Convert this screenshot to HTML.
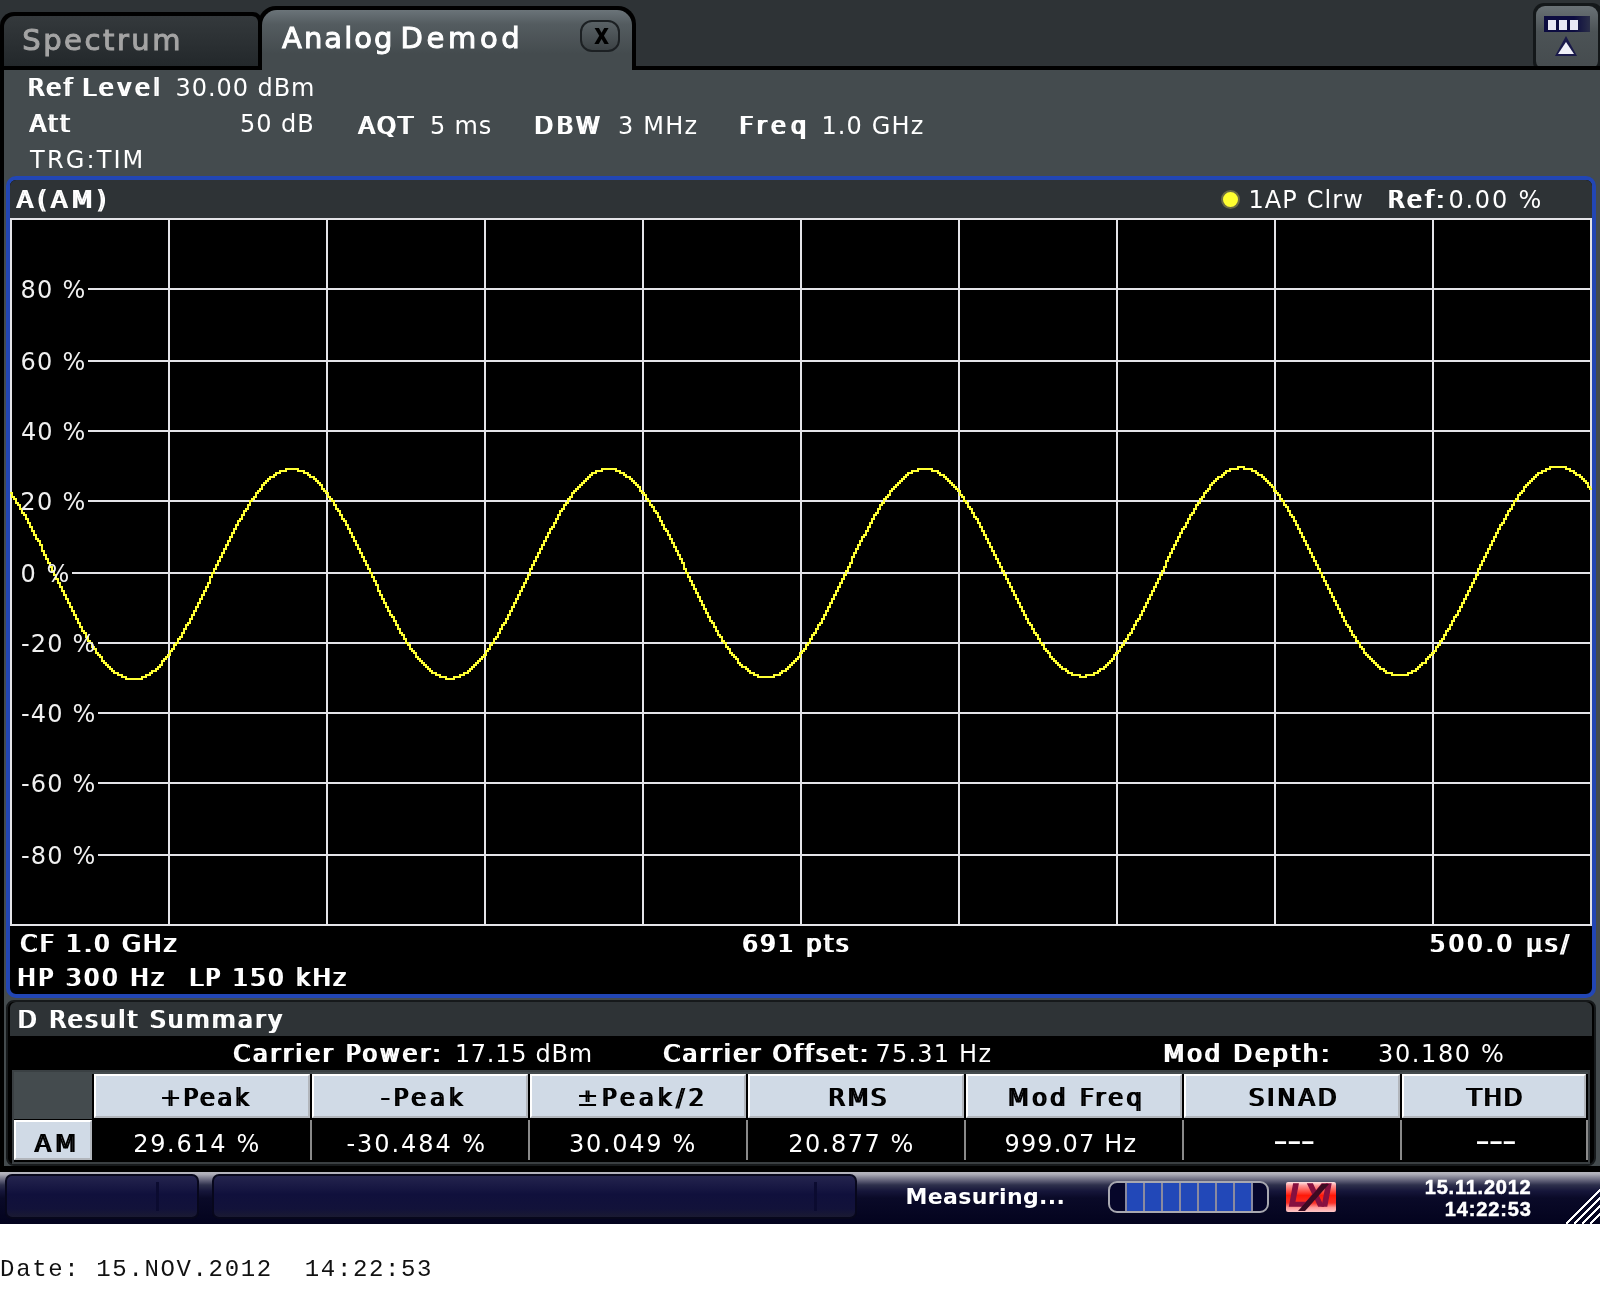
<!DOCTYPE html>
<html><head><meta charset="utf-8"><title>Analog Demod</title>
<style>
html,body{margin:0;padding:0;background:#fff;}
body{width:1600px;height:1316px;position:relative;overflow:hidden;font-family:'DejaVu Sans','Liberation Sans',sans-serif;}
.a{position:absolute;box-sizing:border-box;}
.t{position:absolute;white-space:pre;line-height:0;}
.hc{position:absolute;box-sizing:border-box;background:#d0dae6;border-left:2px solid #fff;border-top:2px solid #fff;border-right:2px solid #b2b6bc;border-bottom:2px solid #b2b6bc;}
.vs{position:absolute;width:2px;background:#8a8a8a;top:1120px;height:40px;}
</style></head><body><div id="root" style="position:absolute;left:0;top:0;width:1600px;height:1316px;will-change:transform">
<div class="a" style="left:0;top:0;width:1600px;height:1224px;background:#000"></div>
<div class="a" id="topbar" style="left:0;top:0;width:1600px;height:66px;background:#2e3336"></div>
<div class="a" style="left:0;top:12px;width:262px;height:58px;background:#000;border-radius:14px 9px 0 0"></div>
<div class="a" style="left:4px;top:16px;width:254px;height:50px;background:linear-gradient(#34393c,#23282b);border-radius:11px 6px 0 0"></div>
<div class="a" id="panel" style="left:4px;top:70px;width:1596px;height:1096px;background:#444b4e"></div>
<div class="a" style="left:0;top:66px;width:1600px;height:4px;background:#000"></div>
<div class="a" style="left:258px;top:6px;width:378px;height:64px;background:#000;border-radius:18px 18px 0 0"></div>
<div class="a" style="left:262px;top:10px;width:370px;height:64px;background:linear-gradient(#6b7479 0px,#545c60 14px,#444b4e 44px);border-radius:15px 15px 0 0"></div>
<div class="a" style="left:580px;top:20px;width:40px;height:32px;border-radius:12px;border:2px solid #1c2023;background:linear-gradient(#5a6266,#3c4245)"></div>
<div class="t" style="left:593.50px;top:35px;font:700 28px/0 'DejaVu Sans','Liberation Sans',sans-serif;letter-spacing:0.000px;color:#000;transform:scaleX(.84);transform-origin:0 50%;">x</div>
<div class="a" style="left:1533px;top:3px;width:70px;height:70px;background:#14181a;border-radius:11px"></div>
<div class="a" style="left:1536px;top:6px;width:62px;height:64px;background:linear-gradient(#6a7276,#4c5356 40%,#454b4e);border-radius:9px"></div>
<div class="a" style="left:1400px;top:66px;width:200px;height:4px;background:#000"></div>
<div class="a" style="left:1400px;top:70px;width:200px;height:10px;background:#444b4e"></div>
<div class="a" style="left:1544px;top:16px;width:46px;height:16px;background:linear-gradient(90deg,#0c0c40 65%,#2a2e48)"></div>
<div class="a" style="left:1548px;top:20px;width:8px;height:10px;background:#e8e8f4"></div>
<div class="a" style="left:1559px;top:20px;width:8px;height:10px;background:#e8e8f4"></div>
<div class="a" style="left:1570px;top:20px;width:8px;height:10px;background:#e8e8f4"></div>
<svg class="a" style="left:1554px;top:34px" width="24" height="24"><polygon points="12,2 23,22 1,22" fill="#1a1a4a"/><polygon points="12,8 20,20 4,20" fill="#f0f0f8"/></svg>
<div class="t" style="left:22.23px;top:40px;font:400 29px/0 'DejaVu Sans','Liberation Sans',sans-serif;letter-spacing:2.539px;color:#a4a4a4;-webkit-text-stroke:1px #a4a4a4;">Spectrum</div>
<div class="t" style="left:282.05px;top:38px;font:400 29px/0 'DejaVu Sans','Liberation Sans',sans-serif;letter-spacing:2.050px;color:#fff;-webkit-text-stroke:1px #fff;">Analog</div>
<div class="t" style="left:400.62px;top:38px;font:400 29px/0 'DejaVu Sans','Liberation Sans',sans-serif;letter-spacing:3.625px;color:#fff;-webkit-text-stroke:1px #fff;">Demod</div>
<div class="t" style="left:27.02px;top:88px;font:400 24px/0 'DejaVu Sans','Liberation Sans',sans-serif;letter-spacing:2.738px;color:#fff;text-shadow:2px 0 0 #fff;">Ref</div>
<div class="t" style="left:81.38px;top:88px;font:400 24px/0 'DejaVu Sans','Liberation Sans',sans-serif;letter-spacing:3.531px;color:#fff;text-shadow:2px 0 0 #fff;">Level</div>
<div class="t" style="left:175.62px;top:88px;font:400 24px/0 'DejaVu Sans','Liberation Sans',sans-serif;letter-spacing:0.925px;color:#fff;">30.00 dBm</div>
<div class="t" style="left:28.75px;top:124px;font:400 24px/0 'DejaVu Sans','Liberation Sans',sans-serif;letter-spacing:2.500px;color:#fff;text-shadow:2px 0 0 #fff;">Att</div>
<div class="t" style="left:240.12px;top:124px;font:400 24px/0 'DejaVu Sans','Liberation Sans',sans-serif;letter-spacing:0.938px;color:#fff;">50 dB</div>
<div class="t" style="left:357.55px;top:126px;font:400 24px/0 'DejaVu Sans','Liberation Sans',sans-serif;letter-spacing:2.412px;color:#fff;text-shadow:2px 0 0 #fff;">AQT</div>
<div class="t" style="left:430.12px;top:126px;font:400 24px/0 'DejaVu Sans','Liberation Sans',sans-serif;letter-spacing:0.750px;color:#fff;">5 ms</div>
<div class="t" style="left:533.62px;top:126px;font:400 24px/0 'DejaVu Sans','Liberation Sans',sans-serif;letter-spacing:3.625px;color:#fff;text-shadow:2px 0 0 #fff;">DBW</div>
<div class="t" style="left:618.12px;top:126px;font:400 24px/0 'DejaVu Sans','Liberation Sans',sans-serif;letter-spacing:1.156px;color:#fff;">3 MHz</div>
<div class="t" style="left:738.62px;top:126px;font:400 24px/0 'DejaVu Sans','Liberation Sans',sans-serif;letter-spacing:5.042px;color:#fff;text-shadow:2px 0 0 #fff;">Freq</div>
<div class="t" style="left:821.38px;top:126px;font:400 24px/0 'DejaVu Sans','Liberation Sans',sans-serif;letter-spacing:1.167px;color:#fff;">1.0 GHz</div>
<div class="t" style="left:30.12px;top:160px;font:400 24px/0 'DejaVu Sans','Liberation Sans',sans-serif;letter-spacing:2.125px;color:#fff;">TRG:TIM</div>
<div class="a" id="win" style="left:6px;top:176px;width:1590px;height:822px;border:4px solid #2246b4;border-radius:10px;background:#000"></div>
<div class="a" style="left:10px;top:180px;width:1582px;height:38px;background:#2e3336;border-radius:6px 6px 0 0"></div>
<div class="t" style="left:15.75px;top:200px;font:400 24px/0 'DejaVu Sans','Liberation Sans',sans-serif;letter-spacing:4.250px;color:#fff;text-shadow:2px 0 0 #fff;">A(AM)</div>
<div class="a" style="left:1221px;top:190px;width:19px;height:19px;border-radius:50%;background:#ffff30;border:2px solid #6c6c44"></div>
<div class="t" style="left:1248.38px;top:200px;font:400 24px/0 'DejaVu Sans','Liberation Sans',sans-serif;letter-spacing:1.125px;color:#fff;">1AP Clrw</div>
<div class="t" style="left:1387.12px;top:200px;font:400 24px/0 'DejaVu Sans','Liberation Sans',sans-serif;letter-spacing:3.375px;color:#fff;text-shadow:2px 0 0 #fff;">Ref:</div>
<div class="t" style="left:1448.38px;top:200px;font:400 24px/0 'DejaVu Sans','Liberation Sans',sans-serif;letter-spacing:1.800px;color:#fff;">0.00 %</div>
<svg class="a" style="left:0;top:0" width="1600" height="1000" shape-rendering="crispEdges"><rect x="10" y="218" width="2" height="708" fill="#e4e4e8"/><rect x="168" y="218" width="2" height="708" fill="#e4e4e8"/><rect x="326" y="218" width="2" height="708" fill="#e4e4e8"/><rect x="484" y="218" width="2" height="708" fill="#e4e4e8"/><rect x="642" y="218" width="2" height="708" fill="#e4e4e8"/><rect x="800" y="218" width="2" height="708" fill="#e4e4e8"/><rect x="958" y="218" width="2" height="708" fill="#e4e4e8"/><rect x="1116" y="218" width="2" height="708" fill="#e4e4e8"/><rect x="1274" y="218" width="2" height="708" fill="#e4e4e8"/><rect x="1432" y="218" width="2" height="708" fill="#e4e4e8"/><rect x="1590" y="218" width="2" height="708" fill="#e4e4e8"/><rect x="10" y="218" width="1582" height="2" fill="#e4e4e8"/><rect x="88" y="288" width="1504" height="2" fill="#e4e4e8"/><rect x="88" y="360" width="1504" height="2" fill="#e4e4e8"/><rect x="88" y="430" width="1504" height="2" fill="#e4e4e8"/><rect x="88" y="500" width="1504" height="2" fill="#e4e4e8"/><rect x="72" y="572" width="1520" height="2" fill="#e4e4e8"/><rect x="98" y="642" width="1494" height="2" fill="#e4e4e8"/><rect x="98" y="712" width="1494" height="2" fill="#e4e4e8"/><rect x="98" y="782" width="1494" height="2" fill="#e4e4e8"/><rect x="98" y="854" width="1494" height="2" fill="#e4e4e8"/><rect x="10" y="924" width="1582" height="2" fill="#e4e4e8"/><path d="M10,493h2V497h2V499h2V503h2V505h2V509h2V513h2V515h2V519h2V523h2V527h2V531h2V535h2V539h2V541h2V545h2V551h2V555h2V559h2V563h2V567h2V571h2V575h2V579h2V583h2V587h2V591h2V595h2V599h2V603h2V607h2V611h2V615h2V619h2V623h2V627h2V631h2V633h2V637h2V641h2V643h2V647h2V649h2V653h2V655h2V657h2V661h2V663h2V665h2V667h2V669h2V671h2V673h2V673h2V675h2V675h2V677h2V677h2V679h2V679h2V679h2V679h2V679h2V679h2V679h2V679h2V677h2V677h2V675h2V675h2V673h2V671h2V671h2V669h2V667h2V665h2V661h2V659h2V657h2V655h2V651h2V649h2V645h2V643h2V639h2V637h2V633h2V629h2V625h2V623h2V619h2V615h2V611h2V607h2V603h2V599h2V595h2V591h2V587h2V583h2V577h2V573h2V569h2V565h2V561h2V557h2V553h2V549h2V545h2V541h2V537h2V533h2V529h2V525h2V521h2V519h2V515h2V511h2V509h2V505h2V501h2V499h2V497h2V493h2V491h2V489h2V485h2V483h2V481h2V479h2V477h2V477h2V475h2V473h2V473h2V471h2V471h2V471h2V469h2V469h2V469h2V469h2V469h2V469h2V471h2V471h2V471h2V473h2V473h2V475h2V477h2V477h2V479h2V481h2V483h2V485h2V489h2V491h2V493h2V497h2V499h2V501h2V505h2V509h2V511h2V515h2V519h2V521h2V525h2V529h2V533h2V537h2V541h2V545h2V549h2V553h2V557h2V561h2V565h2V569h2V573h2V577h2V581h2V585h2V591h2V595h2V599h2V603h2V607h2V611h2V615h2V617h2V621h2V625h2V629h2V633h2V635h2V639h2V643h2V645h2V649h2V651h2V653h2V657h2V659h2V661h2V663h2V665h2V667h2V669h2V671h2V673h2V673h2V675h2V675h2V677h2V677h2V677h2V679h2V679h2V679h2V679h2V677h2V677h2V677h2V675h2V675h2V673h2V673h2V671h2V669h2V667h2V665h2V663h2V661h2V659h2V657h2V655h2V651h2V649h2V645h2V643h2V639h2V637h2V633h2V629h2V625h2V623h2V619h2V615h2V611h2V607h2V603h2V599h2V595h2V591h2V587h2V583h2V579h2V575h2V569h2V565h2V561h2V557h2V553h2V549h2V545h2V541h2V537h2V533h2V529h2V527h2V523h2V519h2V515h2V511h2V509h2V505h2V503h2V499h2V497h2V493h2V491h2V489h2V487h2V485h2V483h2V481h2V479h2V477h2V475h2V473h2V473h2V471h2V471h2V471h2V469h2V469h2V469h2V469h2V469h2V469h2V469h2V471h2V471h2V473h2V473h2V475h2V477h2V477h2V479h2V481h2V483h2V485h2V487h2V491h2V493h2V495h2V499h2V501h2V505h2V507h2V511h2V513h2V517h2V521h2V525h2V529h2V531h2V535h2V539h2V543h2V547h2V551h2V555h2V559h2V563h2V569h2V573h2V577h2V581h2V585h2V589h2V593h2V597h2V601h2V605h2V609h2V613h2V617h2V621h2V623h2V627h2V631h2V635h2V637h2V641h2V643h2V647h2V649h2V653h2V655h2V657h2V659h2V663h2V665h2V667h2V667h2V669h2V671h2V673h2V673h2V675h2V675h2V677h2V677h2V677h2V677h2V677h2V677h2V677h2V677h2V675h2V675h2V675h2V673h2V671h2V671h2V669h2V667h2V665h2V663h2V661h2V659h2V657h2V653h2V651h2V649h2V645h2V643h2V639h2V635h2V633h2V629h2V625h2V623h2V619h2V615h2V611h2V607h2V603h2V599h2V595h2V591h2V587h2V583h2V579h2V575h2V571h2V567h2V563h2V557h2V553h2V549h2V545h2V541h2V537h2V535h2V531h2V527h2V523h2V519h2V515h2V513h2V509h2V505h2V503h2V499h2V497h2V495h2V491h2V489h2V487h2V485h2V483h2V481h2V479h2V477h2V475h2V473h2V473h2V471h2V471h2V471h2V469h2V469h2V469h2V469h2V469h2V469h2V469h2V471h2V471h2V471h2V473h2V475h2V475h2V477h2V479h2V481h2V483h2V485h2V487h2V489h2V491h2V495h2V497h2V501h2V503h2V507h2V509h2V513h2V517h2V519h2V523h2V527h2V531h2V535h2V539h2V543h2V547h2V551h2V555h2V559h2V563h2V567h2V571h2V575h2V579h2V583h2V587h2V591h2V595h2V599h2V603h2V607h2V611h2V615h2V619h2V623h2V625h2V629h2V633h2V635h2V639h2V643h2V645h2V649h2V651h2V653h2V657h2V659h2V661h2V663h2V665h2V667h2V669h2V669h2V671h2V673h2V673h2V675h2V675h2V675h2V675h2V677h2V677h2V677h2V675h2V675h2V675h2V675h2V673h2V673h2V671h2V669h2V669h2V667h2V665h2V663h2V661h2V659h2V655h2V653h2V651h2V647h2V645h2V641h2V639h2V635h2V633h2V629h2V625h2V621h2V619h2V615h2V611h2V607h2V603h2V599h2V595h2V591h2V587h2V583h2V579h2V575h2V571h2V567h2V561h2V557h2V553h2V549h2V545h2V541h2V537h2V533h2V529h2V527h2V523h2V519h2V515h2V513h2V509h2V505h2V503h2V499h2V497h2V493h2V491h2V489h2V485h2V483h2V481h2V479h2V477h2V477h2V475h2V473h2V471h2V471h2V469h2V469h2V469h2V469h2V467h2V467h2V467h2V469h2V469h2V469h2V469h2V471h2V471h2V473h2V475h2V475h2V477h2V479h2V481h2V483h2V485h2V487h2V491h2V493h2V495h2V499h2V501h2V505h2V507h2V511h2V515h2V517h2V521h2V525h2V529h2V533h2V537h2V541h2V545h2V549h2V553h2V557h2V561h2V565h2V569h2V573h2V577h2V581h2V585h2V589h2V593h2V597h2V601h2V605h2V609h2V613h2V617h2V621h2V625h2V627h2V631h2V635h2V637h2V641h2V643h2V647h2V649h2V653h2V655h2V657h2V659h2V661h2V663h2V665h2V667h2V669h2V669h2V671h2V673h2V673h2V673h2V675h2V675h2V675h2V675h2V675h2V675h2V675h2V675h2V673h2V673h2V671h2V671h2V669h2V667h2V665h2V663h2V663h2V659h2V657h2V655h2V653h2V651h2V647h2V645h2V641h2V639h2V635h2V631h2V629h2V625h2V621h2V617h2V615h2V611h2V607h2V603h2V599h2V595h2V591h2V587h2V583h2V579h2V575h2V569h2V565h2V561h2V557h2V553h2V549h2V545h2V541h2V537h2V533h2V529h2V525h2V523h2V519h2V515h2V511h2V509h2V505h2V501h2V499h2V495h2V493h2V491h2V487h2V485h2V483h2V481h2V479h2V477h2V475h2V473h2V473h2V471h2V471h2V469h2V469h2V467h2V467h2V467h2V467h2V467h2V467h2V467h2V467h2V469h2V469h2V471h2V471h2V473h2V475h2V475h2V477h2V479h2V481h2V483h2V487h2V489h2" fill="none" stroke="#ffff33" stroke-width="2" stroke-linejoin="miter" stroke-linecap="butt"/></svg>
<div class="t" style="left:20.38px;top:290px;font:400 24px/0 'DejaVu Sans','Liberation Sans',sans-serif;letter-spacing:1.333px;color:#f0f0f0;">80 %</div>
<div class="t" style="left:20.38px;top:362px;font:400 24px/0 'DejaVu Sans','Liberation Sans',sans-serif;letter-spacing:1.333px;color:#f0f0f0;">60 %</div>
<div class="t" style="left:20.88px;top:432px;font:400 24px/0 'DejaVu Sans','Liberation Sans',sans-serif;letter-spacing:1.167px;color:#f0f0f0;">40 %</div>
<div class="t" style="left:20.25px;top:502px;font:400 24px/0 'DejaVu Sans','Liberation Sans',sans-serif;letter-spacing:1.375px;color:#f0f0f0;">20 %</div>
<div class="t" style="left:20.38px;top:574px;font:400 24px/0 'DejaVu Sans','Liberation Sans',sans-serif;letter-spacing:1.625px;color:#f0f0f0;">0 %</div>
<div class="t" style="left:20.88px;top:644px;font:400 24px/0 'DejaVu Sans','Liberation Sans',sans-serif;letter-spacing:1.188px;color:#f0f0f0;">-20 %</div>
<div class="t" style="left:20.88px;top:714px;font:400 24px/0 'DejaVu Sans','Liberation Sans',sans-serif;letter-spacing:1.188px;color:#f0f0f0;">-40 %</div>
<div class="t" style="left:20.88px;top:784px;font:400 24px/0 'DejaVu Sans','Liberation Sans',sans-serif;letter-spacing:1.188px;color:#f0f0f0;">-60 %</div>
<div class="t" style="left:20.88px;top:856px;font:400 24px/0 'DejaVu Sans','Liberation Sans',sans-serif;letter-spacing:1.188px;color:#f0f0f0;">-80 %</div>
<div class="t" style="left:19.62px;top:944px;font:400 24px/0 'DejaVu Sans','Liberation Sans',sans-serif;letter-spacing:2.514px;color:#fff;text-shadow:2px 0 0 #fff;">CF 1.0 GHz</div>
<div class="t" style="left:741.38px;top:944px;font:400 24px/0 'DejaVu Sans','Liberation Sans',sans-serif;letter-spacing:2.604px;color:#fff;text-shadow:2px 0 0 #fff;">691 pts</div>
<div class="t" style="left:1429.12px;top:944px;font:400 24px/0 'DejaVu Sans','Liberation Sans',sans-serif;letter-spacing:3.328px;color:#fff;text-shadow:2px 0 0 #fff;">500.0 µs/</div>
<div class="t" style="left:16.62px;top:978px;font:400 24px/0 'DejaVu Sans','Liberation Sans',sans-serif;letter-spacing:2.766px;color:#fff;text-shadow:2px 0 0 #fff;">HP 300 Hz</div>
<div class="t" style="left:188.62px;top:978px;font:400 24px/0 'DejaVu Sans','Liberation Sans',sans-serif;letter-spacing:2.542px;color:#fff;text-shadow:2px 0 0 #fff;">LP 150 kHz</div>
<div class="a" style="left:6px;top:1000px;width:1590px;height:166px;background:#000;border:2px solid #16191b;border-radius:8px"></div>
<div class="a" style="left:10px;top:1002px;width:1582px;height:34px;background:#2e3336;border-radius:6px 6px 0 0"></div>
<div class="t" style="left:17.12px;top:1020px;font:400 24px/0 'DejaVu Sans','Liberation Sans',sans-serif;letter-spacing:2.683px;color:#fff;text-shadow:2px 0 0 #fff;">D Result Summary</div>
<div class="t" style="left:232.38px;top:1054px;font:400 24px/0 'DejaVu Sans','Liberation Sans',sans-serif;letter-spacing:2.865px;color:#fff;text-shadow:2px 0 0 #fff;">Carrier Power:</div>
<div class="t" style="left:454.88px;top:1054px;font:400 24px/0 'DejaVu Sans','Liberation Sans',sans-serif;letter-spacing:0.719px;color:#fff;">17.15 dBm</div>
<div class="t" style="left:662.38px;top:1054px;font:400 24px/0 'DejaVu Sans','Liberation Sans',sans-serif;letter-spacing:2.464px;color:#fff;text-shadow:2px 0 0 #fff;">Carrier Offset:</div>
<div class="t" style="left:875.50px;top:1054px;font:400 24px/0 'DejaVu Sans','Liberation Sans',sans-serif;letter-spacing:1.214px;color:#fff;">75.31 Hz</div>
<div class="t" style="left:1162.62px;top:1054px;font:400 24px/0 'DejaVu Sans','Liberation Sans',sans-serif;letter-spacing:2.917px;color:#fff;text-shadow:2px 0 0 #fff;">Mod Depth:</div>
<div class="t" style="left:1378.12px;top:1054px;font:400 24px/0 'DejaVu Sans','Liberation Sans',sans-serif;letter-spacing:1.607px;color:#fff;">30.180 %</div>
<div class="a" style="left:12px;top:1070px;width:1578px;height:94px;background:#000;border:2px solid #3a3f42;border-top:2px solid #3a4043;box-shadow:inset 0 2px 0 #444b4e"></div>
<div class="a" style="left:14px;top:1073px;width:78px;height:46px;background:#444b4e"></div>
<div class="hc" style="left:14px;top:1120px;width:78px;height:40px"></div>
<div class="hc" style="left:94px;top:1074px;width:216px;height:44px"></div>
<div class="t" style="left:159.50px;top:1098px;font:400 24px/0 'DejaVu Sans','Liberation Sans',sans-serif;letter-spacing:2.875px;color:#000;text-shadow:2px 0 0 #000;">+Peak</div>
<div class="t" style="left:133.25px;top:1144px;font:400 24px/0 'DejaVu Sans','Liberation Sans',sans-serif;letter-spacing:1.661px;color:#fff;">29.614 %</div>
<div class="hc" style="left:312px;top:1074px;width:216px;height:44px"></div>
<div class="vs" style="left:310px"></div>
<div class="t" style="left:379.88px;top:1098px;font:400 24px/0 'DejaVu Sans','Liberation Sans',sans-serif;letter-spacing:4.094px;color:#000;text-shadow:2px 0 0 #000;">-Peak</div>
<div class="t" style="left:346.38px;top:1144px;font:400 24px/0 'DejaVu Sans','Liberation Sans',sans-serif;letter-spacing:1.953px;color:#fff;">-30.484 %</div>
<div class="hc" style="left:530px;top:1074px;width:216px;height:44px"></div>
<div class="vs" style="left:528px"></div>
<div class="t" style="left:576.50px;top:1098px;font:400 24px/0 'DejaVu Sans','Liberation Sans',sans-serif;letter-spacing:4.333px;color:#000;text-shadow:2px 0 0 #000;">±Peak/2</div>
<div class="t" style="left:569.12px;top:1144px;font:400 24px/0 'DejaVu Sans','Liberation Sans',sans-serif;letter-spacing:1.679px;color:#fff;">30.049 %</div>
<div class="hc" style="left:748px;top:1074px;width:216px;height:44px"></div>
<div class="vs" style="left:746px"></div>
<div class="t" style="left:827.62px;top:1098px;font:400 24px/0 'DejaVu Sans','Liberation Sans',sans-serif;letter-spacing:2.562px;color:#000;text-shadow:2px 0 0 #000;">RMS</div>
<div class="t" style="left:788.25px;top:1144px;font:400 24px/0 'DejaVu Sans','Liberation Sans',sans-serif;letter-spacing:1.518px;color:#fff;">20.877 %</div>
<div class="hc" style="left:966px;top:1074px;width:216px;height:44px"></div>
<div class="vs" style="left:964px"></div>
<div class="t" style="left:1007.12px;top:1098px;font:400 24px/0 'DejaVu Sans','Liberation Sans',sans-serif;letter-spacing:3.411px;color:#000;text-shadow:2px 0 0 #000;">Mod Freq</div>
<div class="t" style="left:1004.50px;top:1144px;font:400 24px/0 'DejaVu Sans','Liberation Sans',sans-serif;letter-spacing:1.156px;color:#fff;">999.07 Hz</div>
<div class="hc" style="left:1184px;top:1074px;width:216px;height:44px"></div>
<div class="vs" style="left:1182px"></div>
<div class="t" style="left:1247.88px;top:1098px;font:400 24px/0 'DejaVu Sans','Liberation Sans',sans-serif;letter-spacing:3.094px;color:#000;text-shadow:2px 0 0 #000;">SINAD</div>
<div class="hc" style="left:1402px;top:1074px;width:184px;height:44px"></div>
<div class="vs" style="left:1400px"></div>
<div class="t" style="left:1466.12px;top:1098px;font:400 24px/0 'DejaVu Sans','Liberation Sans',sans-serif;letter-spacing:2.000px;color:#000;text-shadow:2px 0 0 #000;">THD</div>
<div class="vs" style="left:1586px"></div>
<div class="t" style="left:33.75px;top:1144px;font:400 24px/0 'DejaVu Sans','Liberation Sans',sans-serif;letter-spacing:4.000px;color:#000;text-shadow:2px 0 0 #000;">AM</div>
<div class="t" style="left:1272.88px;top:1141px;font:400 24px/0 'DejaVu Sans','Liberation Sans',sans-serif;letter-spacing:-0.850px;color:#fff;transform:scale(1.746,1.4);transform-origin:0 1.6px;">---</div>
<div class="t" style="left:1474.88px;top:1141px;font:400 24px/0 'DejaVu Sans','Liberation Sans',sans-serif;letter-spacing:-0.993px;color:#fff;transform:scale(1.746,1.4);transform-origin:0 1.6px;">---</div>
<div class="a" id="status" style="left:0;top:1172px;width:1600px;height:52px;background:linear-gradient(#b6b6be 0px,#b0b0ba 2px,#8a8a9a 5px,#5c5c74 9px,#2e304c 13px,#16163a 19px,#0a0a28 26px,#03031e 52px)"></div>
<div class="a" style="left:5px;top:1174px;width:194px;height:45px;border-radius:7px;background:linear-gradient(#24244e,#10103c 45%,#12123a 80%,#1a1a32);border:2px solid #07071c"></div>
<div class="a" style="left:156px;top:1182px;width:3px;height:29px;background:#0b0b30"></div>
<div class="a" style="left:212px;top:1174px;width:645px;height:45px;border-radius:7px;background:linear-gradient(#24244e,#10103c 45%,#12123a 80%,#1a1a32);border:2px solid #07071c"></div>
<div class="a" style="left:814px;top:1182px;width:3px;height:29px;background:#0b0b30"></div>
<div class="t" style="left:905.60px;top:1197px;font:700 22px/0 'DejaVu Sans','Liberation Sans',sans-serif;letter-spacing:0.355px;color:#fff;">Measuring...</div>
<div class="a" style="left:1108px;top:1181px;width:161px;height:32px;border-radius:9px;border:2px solid #a8a8b0;background:#06062a"></div>
<div class="a" style="left:1127px;top:1183px;width:16px;height:28px;background:#2248b8"></div>
<div class="a" style="left:1145px;top:1183px;width:16px;height:28px;background:#2248b8"></div>
<div class="a" style="left:1163px;top:1183px;width:16px;height:28px;background:#2248b8"></div>
<div class="a" style="left:1181px;top:1183px;width:16px;height:28px;background:#2248b8"></div>
<div class="a" style="left:1199px;top:1183px;width:16px;height:28px;background:#2248b8"></div>
<div class="a" style="left:1217px;top:1183px;width:16px;height:28px;background:#2248b8"></div>
<div class="a" style="left:1235px;top:1183px;width:16px;height:28px;background:#2248b8"></div>
<div class="a" style="left:1125px;top:1183px;width:2px;height:28px;background:#8a8aa0"></div>
<div class="a" style="left:1143px;top:1183px;width:2px;height:28px;background:#8a8aa0"></div>
<div class="a" style="left:1161px;top:1183px;width:2px;height:28px;background:#8a8aa0"></div>
<div class="a" style="left:1179px;top:1183px;width:2px;height:28px;background:#8a8aa0"></div>
<div class="a" style="left:1197px;top:1183px;width:2px;height:28px;background:#8a8aa0"></div>
<div class="a" style="left:1215px;top:1183px;width:2px;height:28px;background:#8a8aa0"></div>
<div class="a" style="left:1233px;top:1183px;width:2px;height:28px;background:#8a8aa0"></div>
<div class="a" style="left:1251px;top:1183px;width:2px;height:28px;background:#8a8aa0"></div>
<svg class="a" style="left:1286px;top:1182px" width="50" height="30"><defs><linearGradient id="lg" x1="0" y1="0" x2="0" y2="1"><stop offset="0" stop-color="#ffe8e8"/><stop offset="0.12" stop-color="#ff9a9a"/><stop offset="0.45" stop-color="#ff1808"/><stop offset="0.7" stop-color="#f83028"/><stop offset="0.85" stop-color="#ff9a9a"/><stop offset="1" stop-color="#ffc8c8"/></linearGradient></defs><rect x="0" y="0" width="50" height="30" rx="2" fill="url(#lg)"/><text x="3" y="24" font-family="Liberation Sans, sans-serif" font-weight="700" font-style="italic" font-size="31" letter-spacing="-3.4" fill="#861040" stroke="#861040" stroke-width="1.3">LXI</text><polygon points="12,29 19,29 43,2 36,2" fill="#3c0a22"/></svg>
<div class="t" style="left:1424.75px;top:1187px;font:700 20px/0 'Liberation Sans',sans-serif;letter-spacing:0.778px;color:#fff;-webkit-text-stroke:0.5px #fff;">15.11.2012</div>
<div class="t" style="left:1444.75px;top:1209px;font:700 20px/0 'Liberation Sans',sans-serif;letter-spacing:0.857px;color:#fff;-webkit-text-stroke:0.5px #fff;">14:22:53</div>
<svg class="a" style="left:1560px;top:1184px" width="40" height="40" shape-rendering="crispEdges"><line x1="6" y1="40" x2="41" y2="5" stroke="#fff" stroke-width="2.2"/><line x1="14" y1="40" x2="41" y2="13" stroke="#fff" stroke-width="2.2"/><line x1="22" y1="40" x2="41" y2="21" stroke="#fff" stroke-width="2.2"/><line x1="30" y1="40" x2="41" y2="29" stroke="#fff" stroke-width="2.2"/></svg>
<div class="t" style="left:0.12px;top:1270px;font:400 24px/0 'Liberation Mono',monospace;letter-spacing:1.635px;color:#111;">Date: 15.NOV.2012  14:22:53</div>
</div></body></html>
